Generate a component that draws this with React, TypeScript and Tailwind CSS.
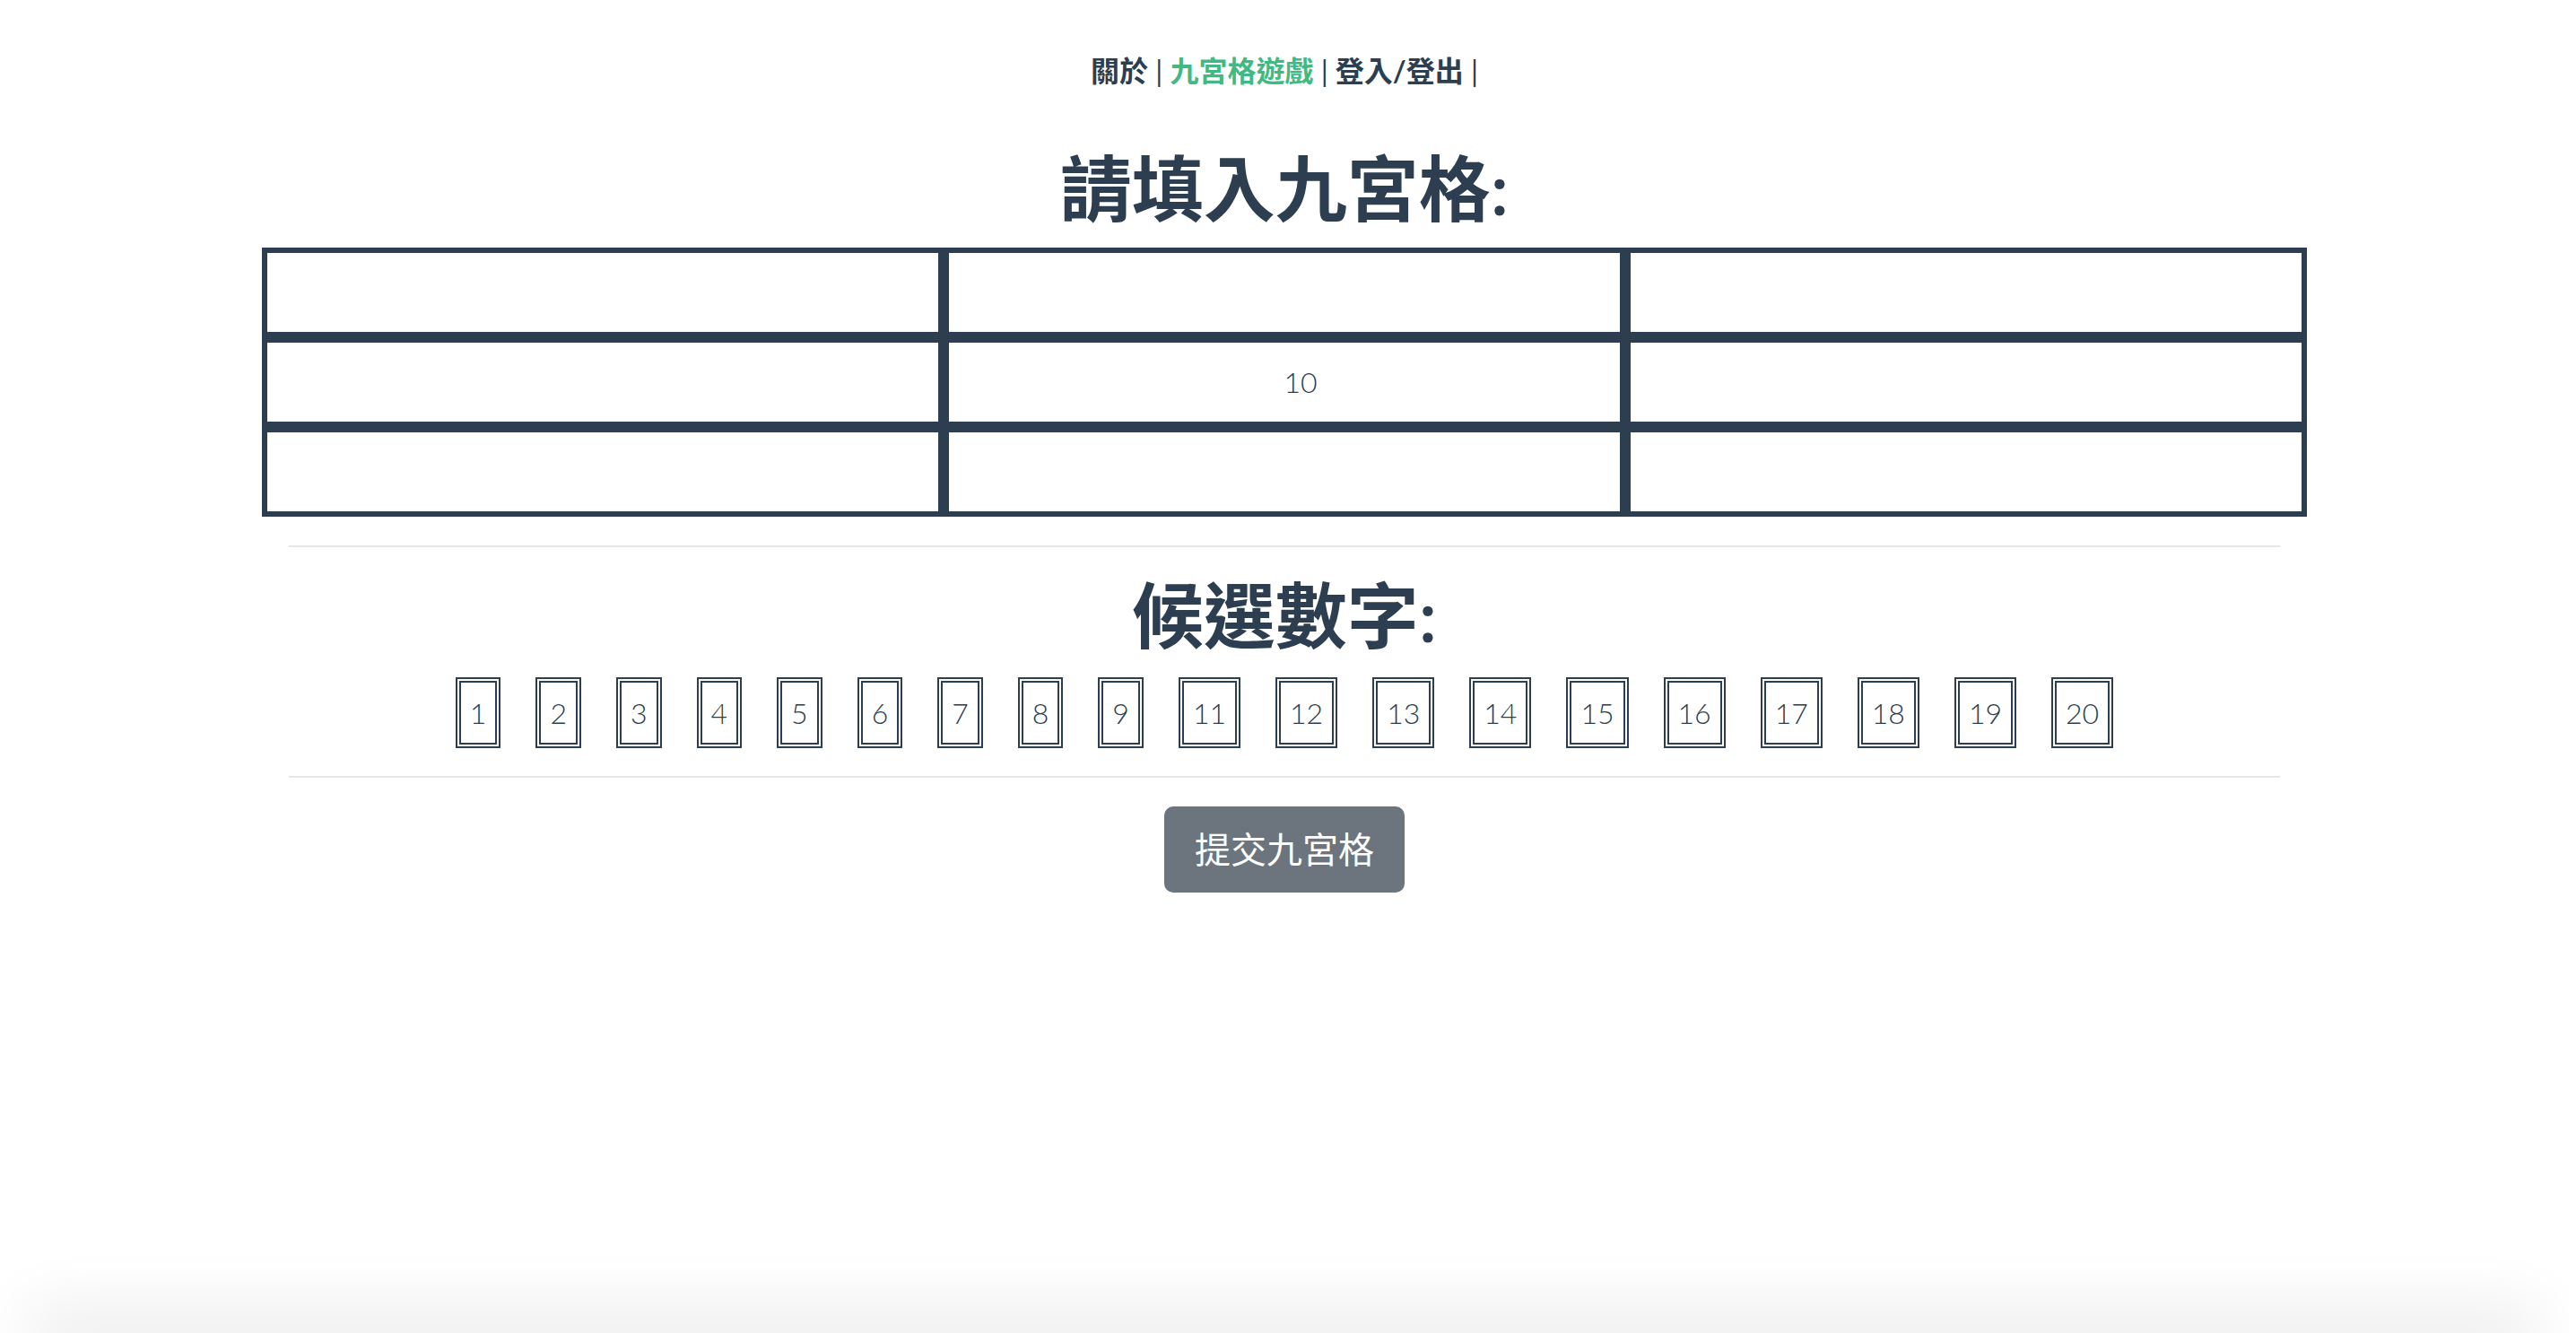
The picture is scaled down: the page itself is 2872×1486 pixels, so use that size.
const candidates = [1, 2, 3, 4, 5, 6, 7, 8, 9, 11, 12, 13, 14, 15, 16, 17, 18, 19, 20];

const cells: (number | null)[] = [null, null, null, null, 10, null, null, null, null];

export default function App() {
  return (
    <div className="flex h-[1486px] w-[2864px] flex-col items-center overflow-hidden bg-white font-['Lato','Noto_Sans_CJK_TC',sans-serif] text-[#2c3e50]">
      {/* nav */}
      <nav className="pt-[55px] text-[32px] leading-[48px]">
        <a className="font-bold text-[#2c3e50]">關於</a>
        <span> | </span>
        <a className="font-bold text-[#42b983]">九宮格遊戲</a>
        <span> | </span>
        <a className="font-bold text-[#2c3e50]">登入/登出</a>
        <span> |</span>
      </nav>

      <div className="w-[2280px] px-[30px]">
        <h1 className="mt-[58px] mb-[19px] text-center text-[80px] font-semibold leading-[96px]">請填入九宮格:</h1>

        {/* 3x3 board */}
        <div className="-mx-[30px] grid grid-cols-3">
          {cells.map((v, i) => (
            <div
              key={i}
              className="flex h-[100px] items-center justify-center border-[6px] border-[#2c3e50] pl-[36px] text-[32px] font-light"
            >
              {v ?? ""}
            </div>
          ))}
        </div>

        <hr className="mt-[32px] border-t-2 border-[#e6e6e6]" />

        <h1 className="mt-[27px] mb-[22px] text-center text-[80px] font-semibold leading-[96px]">候選數字:</h1>

        <div className="flex justify-center gap-[39px]">
          {candidates.map((n) => (
            <span
              key={n}
              className="border-[6px] border-double border-[#2c3e50] px-[10px] py-[9.5px] text-[32px] font-light leading-[48px]"
            >
              {n}
            </span>
          ))}
        </div>

        <hr className="mt-[31px] border-t-2 border-[#e6e6e6]" />

        <div className="mt-[32px] flex justify-center">
          <button className="rounded-[10px] border-2 border-[#6c757d] bg-[#6c757d] px-[32px] py-[16px] text-[40px] leading-[60px] text-white">
            提交九宮格
          </button>
        </div>
      </div>

      {/* window shadow at the bottom edge */}
      <div className="mt-auto h-0 w-[2740px] translate-y-[1px] shadow-[0_0_70px_30px_rgba(0,0,0,0.08)]" />
    </div>
  );
}
